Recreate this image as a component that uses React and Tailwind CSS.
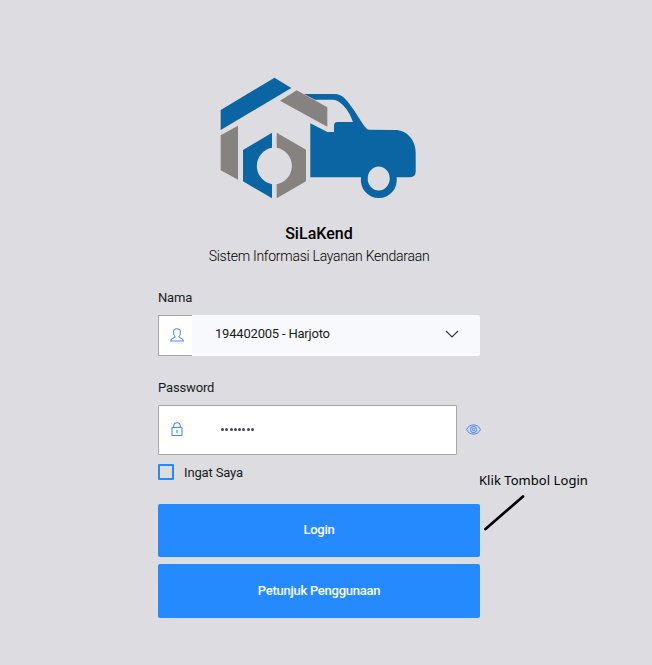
function Logo() {
  return (
    <svg className="block h-[124px] w-[200px]" viewBox="218 76 200 124" aria-hidden="true">
      <g fill="#0b65a3">
        <path d="M220.7 110 274.5 77.7 291.3 88 220.7 130Z" />
        <path d="M272 132.7 243 150V181.3L272 198.3V184.2A18.5 18.5 0 0 1 272 147.8Z" />
        <path
          fillRule="evenodd"
          d="M304 94H334.7C342 94 346 99 352 107.500C358 116 362 123 365.500 127.500Q367.300 129.800 369 129.800L395 130C407 130 415.700 140 415.700 153V171.500Q415.700 177 410 177.200H396.600A18 18.200 0 1 1 361 177.200H310.300V123.300L327.300 132H334V125.500Q334 122 337.500 122H353C350 112 341 99.700 332.700 99.700H315Z M389.700 178.500A11 12 0 1 0 367.700 178.500A11 12 0 1 0 389.700 178.500Z"
        />
      </g>
      <g fill="#86827f">
        <path d="M280 100.700 296.700 90.300 327.300 107.300V126.700Z" />
        <path d="M220.700 135.300 238 125.700V179.700L220.700 170.300Z" />
        <path d="M276.700 132.700 306 149.700V181.300L276.700 198.300V184.200A18.500 18.500 0 0 0 276.700 147.800Z" />
      </g>
    </svg>
  );
}

function UserIcon() {
  return (
    <svg className="h-[14px] w-[14px]" viewBox="0 0 14 14" fill="none" stroke="#4a90ff" strokeWidth="1.100">
      <path d="M5.200 8.600C3.900 7.600 3.500 5.700 3.500 4C3.500 1.800 4.700.7 7 .7S10.500 1.800 10.500 4C10.500 5.700 10.100 7.600 8.800 8.600C9 10.400 13.400 9.700 13.400 13H.6C.6 9.700 5 10.400 5.200 8.600Z" />
    </svg>
  );
}

function LockIcon() {
  return (
    <svg className="h-[14px] w-[12px]" viewBox="0 0 12 14" fill="none" stroke="#3f8cff" strokeWidth="1.100">
      <rect x="1" y="5.500" width="10" height="8" rx=".6" />
      <path d="M2.700 5.500V4A3.300 3.300 0 0 1 9.300 4V5.500" />
      <path d="M6 8.200V11.200M5.200 8.700H6.800" />
    </svg>
  );
}

function EyeIcon() {
  return (
    <svg className="h-[11px] w-[15px]" viewBox="0 0 15 11" fill="none" stroke="#3a86ff">
      <path d="M.6 5.500C2 2.500 4.300.9 7.500.9S13 2.500 14.400 5.500C13 8.500 10.700 10.100 7.500 10.100S2 8.500.6 5.500Z" />
      <circle cx="7.500" cy="5.500" r="3.100" />
      <circle cx="7.500" cy="5.500" r="1.200" />
    </svg>
  );
}

export default function App() {
  return (
    <main className="relative h-[665px] w-[652px] overflow-hidden bg-[#dddce1] pt-[76px] font-['Roboto',sans-serif] text-[13px] tracking-[-0.150px] text-[#181c21]">
      <div className="ml-[218px]">
        <Logo />
      </div>
      <div className="ml-[158px] w-[322px]">
        <h1 className="mt-[23px] text-center text-[16px] leading-[22px] font-medium tracking-[0.030px] text-black">SiLaKend</h1>
        <p className="mt-px text-center text-[14px] leading-5 font-light tracking-[-0.260px] text-black">
          Sistem Informasi Layanan Kendaraan
        </p>

        <div className="mt-[22px] leading-5">Nama</div>
        <div className="mt-[7px] flex h-[41px]">
          <div className="flex w-[34px] items-center justify-center rounded-l-[1px] border border-r-0 border-[#a6a6a8] bg-white pb-[2px] pl-[3px]">
            <UserIcon />
          </div>
          <div className="flex flex-1 items-center justify-between rounded-r-[2px] border-b-2 border-white bg-[#f8f9fc] pr-[21px] pb-px pl-[23px]">
            <span className="tracking-[-0.200px]">194402005 - Harjoto</span>
            <svg className="h-[8px] w-[14px]" viewBox="0 0 14 8" fill="none" stroke="#343a50" strokeWidth="1.200">
              <path d="M1 1 7 7 13 1" />
            </svg>
          </div>
        </div>

        <div className="mt-[22px] leading-5">Password</div>
        <div className="mt-[7px] flex items-center">
          <div className="flex h-[50px] w-[299px] shrink-0 items-center rounded-[1px] border border-[#a6a6a8] bg-white pb-[2px] pl-[12px]">
            <LockIcon />
            <div className="ml-[38px] flex gap-[1.300px]">
              {Array.from({ length: 8 }, (_, i) => (
                <span key={i} className="h-[3px] w-[3px] rounded-full bg-[#45474d]" />
              ))}
            </div>
          </div>
          <div className="ml-[9px] shrink-0 pb-[2px]">
            <EyeIcon />
          </div>
        </div>

        <div className="mt-[7px] flex h-5 items-center gap-[10px]">
          <span className="h-4 w-4 rounded-[1px] border-2 border-[#268aff]" />
          <span className="pt-[2px]">Ingat Saya</span>
        </div>

        <button className="mt-[22px] block h-[53px] w-full rounded-[2px] bg-[#268aff] pb-px font-medium tracking-[-0.260px] text-white">Login</button>
        <button className="mt-[7px] block h-[54px] w-full rounded-[2px] bg-[#268aff] font-medium tracking-[-0.260px] text-white">
          Petunjuk Penggunaan
        </button>
      </div>

      <div className="absolute top-[470px] left-[479px] text-[13px] leading-5 tracking-[0.050px] whitespace-nowrap text-black font-['Noto_Sans',sans-serif]">
        Klik Tombol Login
      </div>
      <svg className="absolute top-[492px] left-[482px] h-[40px] w-[46px]" viewBox="482 492 46 40">
        <path d="M485.500 529 523 496.500" stroke="#000" strokeWidth="2.700" strokeLinecap="round" />
      </svg>
    </main>
  );
}
